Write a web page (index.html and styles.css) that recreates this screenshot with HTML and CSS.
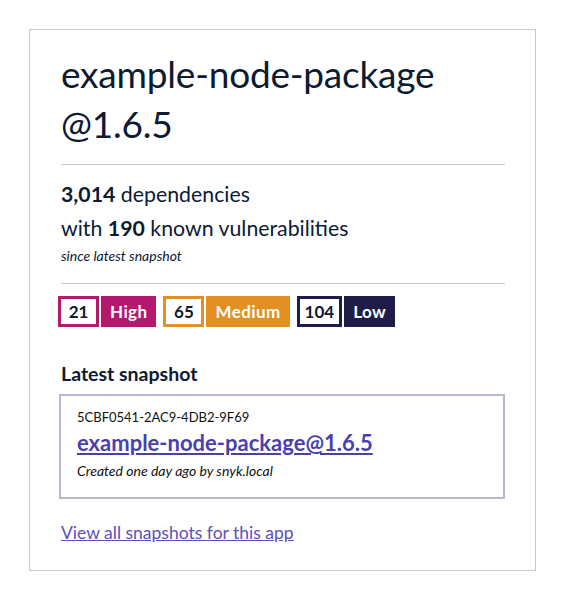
FILE: index.html
```html
<!DOCTYPE html>
<html>
<head>
<meta charset="utf-8">
<link rel="stylesheet" href="styles.css">
</head>
<body>
<div class="card">
  <h1 class="title">example-node-package<br>@1.6.5</h1>
  <hr class="rule">
  <div class="stats">
    <p class="deps"><strong>3,014</strong> dependencies</p>
    <p class="vulns">with <strong>190</strong> known vulnerabilities</p>
    <p class="since">since latest snapshot</p>
  </div>
  <hr class="rule">
  <div class="badges">
    <div class="badge high"><span class="count">21</span><span class="label">High</span></div>
    <div class="badge medium"><span class="count">65</span><span class="label">Medium</span></div>
    <div class="badge low"><span class="count">104</span><span class="label">Low</span></div>
  </div>
  <h2 class="section">Latest snapshot</h2>
  <div class="snapshot">
    <div class="snap-id">5CBF0541-2AC9-4DB2-9F69</div>
    <a class="snap-link" href="#">example-node-package@1.6.5</a>
    <div class="snap-meta">Created one day ago by snyk.local</div>
  </div>
  <a class="all-link" href="#">View all snapshots for this app</a>
</div>
</body>
</html>
```
FILE: styles.css
```css
* { box-sizing: border-box; }
body {
  margin: 0;
  background: #fff;
  font-family: Lato, "Open Sans", sans-serif;
  color: #0c1a33;
}
.card {
  margin: 29px 0 0 29px;
  width: 507px;
  height: 542px;
  border: 1px solid #c9c8d6;
  padding: 19px 30px 0 31px;
}
.title {
  margin: 0;
  font-size: 37px;
  font-weight: 400;
  line-height: 50px;
  letter-spacing: -0.2px;
}
.rule {
  border: 0;
  border-top: 1px solid #c5c4d4;
  margin: 15px 0 0 0;
  height: 0;
}
.stats { padding-top: 12px; padding-bottom: 1px; }
.stats p { margin: 0; }
.deps, .vulns { font-size: 21.3px; line-height: 34px; }
.deps strong, .vulns strong { font-weight: 700; }
.since { font-size: 14px; font-style: italic; line-height: 22px; }
.badges {
  display: flex;
  gap: 7px;
  margin-top: 12px;
  margin-left: -3px;
}
.badge { display: flex; gap: 2px; height: 31px; }
.badge .count {
  display: flex; align-items: center; justify-content: center;
  background: #fff;
  border: 3px solid;
  min-width: 41px;
  padding: 0 5px;
  font-size: 17px;
  font-weight: 700;
  color: #0c1a33;
}
.badge .label {
  display: flex; align-items: center;
  padding: 0 9px;
  font-size: 17px;
  font-weight: 700;
  letter-spacing: 0.4px;
  color: #fff;
}
.high .count { border-color: #b5186f; }
.high .label { background: #b5186f; }
.medium .count { border-color: #e38f22; }
.medium .label { background: #e38f22; }
.low .count { border-color: #201c4a; }
.low .label { background: #201c4a; }
.section {
  margin: 35px 0 0 0;
  font-size: 19.5px;
  font-weight: 700;
  line-height: 24px;
}
.snapshot {
  margin: 8px 0 0 -2px;
  border: 2px solid #b9b7ce;
  padding: 11px 16px 14px 16px;
  height: 105px;
}
.snap-id { font-size: 13px; line-height: 20px; color: #111; }
.snap-link {
  display: inline-block;
  font-size: 22px;
  font-weight: 700;
  color: #4a3fae;
  line-height: 32px;
}
.snap-meta { font-size: 14px; font-style: italic; line-height: 24px; color: #111; }
.all-link {
  display: inline-block;
  margin-top: 22px;
  font-size: 17.5px;
  color: #5a4fbe;
  line-height: 24px;
}
```
